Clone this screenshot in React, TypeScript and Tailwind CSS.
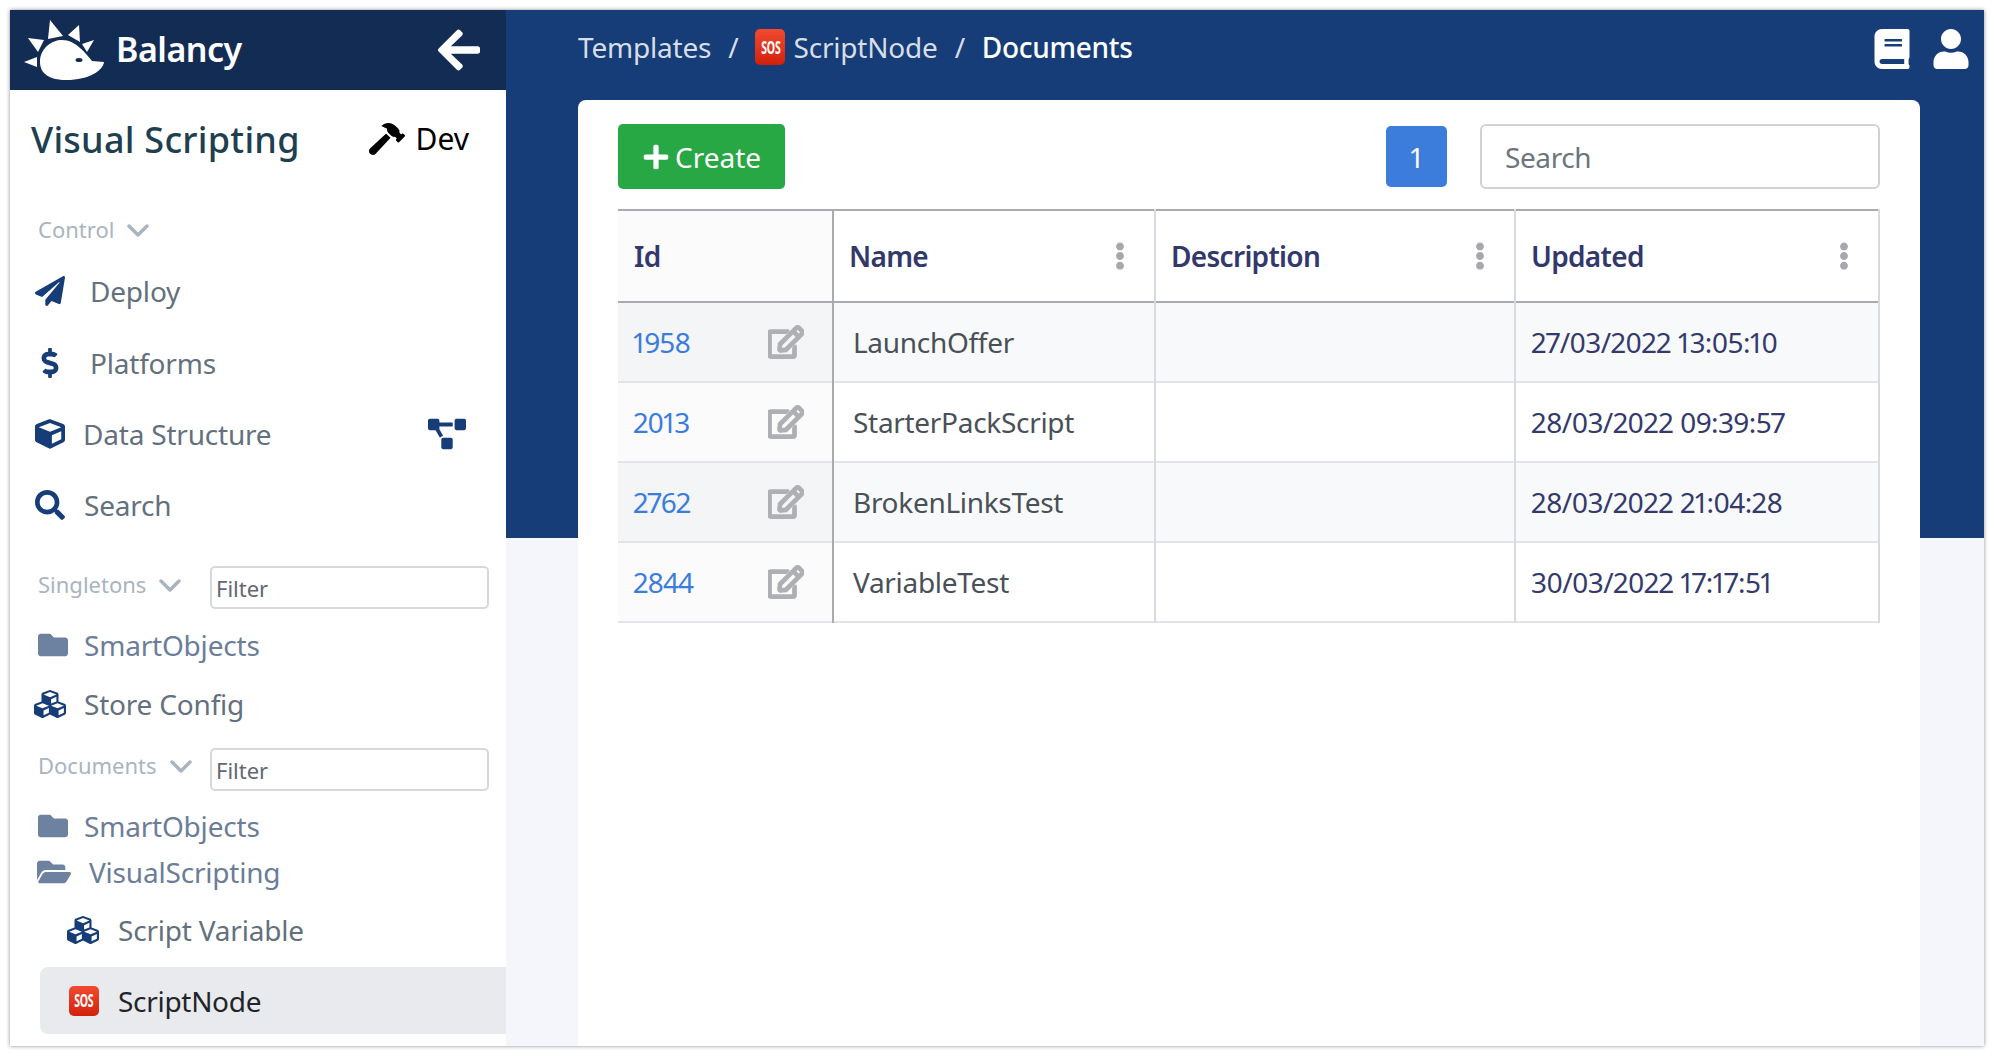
import React from 'react';
import {
  FaArrowLeft, FaBook, FaCube, FaCubes, FaDollarSign, FaEllipsisV, FaFolder, FaFolderOpen,
  FaHammer, FaPaperPlane, FaPlus, FaProjectDiagram, FaRegEdit, FaSearch, FaUser,
} from 'react-icons/fa';

const rows = [
  { id: '1958', name: 'LaunchOffer', updated: '27/03/2022 13:05:10' },
  { id: '2013', name: 'StarterPackScript', updated: '28/03/2022 09:39:57' },
  { id: '2762', name: 'BrokenLinksTest', updated: '28/03/2022 21:04:28' },
  { id: '2844', name: 'VariableTest', updated: '30/03/2022 17:17:51' },
];

function Logo() {
  return (
    <svg viewBox="24 18 80 60" className="w-[80px] h-[60px] shrink-0" fill="#fff">
      <path d="M40 60C40 46 52 38 62 38C76 38 86 52 92 59L104 60C103 68 90 78 66 78C50 78 40 72 40 60Z" />
      <polygon points="50,18 63,34 48,37" />
      <polygon points="79,23 80,40 68,33" />
      <polygon points="94,38 87,50 82,42" />
      <polygon points="28,36 44,38 38,50" />
      <polygon points="24,60 37,55 37,65" />
      <ellipse cx="79" cy="58" rx="3.5" ry="2" fill="#132c53" />
    </svg>
  );
}

function Sos({ className }: { className: string }) {
  return (
    <span className={`flex items-center justify-center rounded-[5px] bg-gradient-to-b from-[#f2492f] to-[#d21f0a] text-white font-bold shrink-0 ${className}`}>
      <span className="scale-x-75 scale-y-125">SOS</span>
    </span>
  );
}

function Chevron() {
  return (
    <svg viewBox="0 0 22 14" className="w-[22px] h-[14px] mt-[3px]" fill="none" stroke="#a9b4c0" strokeWidth="3.5" strokeLinecap="round" strokeLinejoin="round">
      <polyline points="2,2 11,11 20,2" />
    </svg>
  );
}

function SectionLabel({ label, className = '' }: { label: string; className?: string }) {
  return (
    <div className={`flex items-center gap-[13px] text-[22px] text-[#a9b4c0] ${className}`}>
      {label}
      <Chevron />
    </div>
  );
}

function NavItem({ icon, label, textClass }: { icon: React.ReactNode; label: string; textClass: string }) {
  return (
    <div className="flex items-center h-[71px] pl-[24px] text-[28px] tracking-[-0.2px] text-[#64707d]">
      <span className="w-[32px] flex justify-center text-[#163d77] shrink-0">{icon}</span>
      <span className={textClass}>{label}</span>
    </div>
  );
}

function FilterRow({ label, labelClass }: { label: string; labelClass: string }) {
  return (
    <div className="flex items-center justify-between pl-[28px] pr-[17px]">
      <SectionLabel label={label} className={labelClass} />
      <input
        placeholder="Filter"
        className="w-[279px] h-[43px] px-[4px] text-[22px] border-2 border-[#d6d8dc] rounded-[5px] placeholder:text-[#5f6873] outline-none"
      />
    </div>
  );
}

function FolderItem({ icon, label, rowClass, textClass }: { icon: React.ReactNode; label: string; rowClass: string; textClass: string }) {
  return (
    <div className={`flex items-center text-[28px] tracking-[-0.2px] ${rowClass}`}>
      {icon}
      <span className={textClass}>{label}</span>
    </div>
  );
}

function Sidebar() {
  return (
    <aside className="w-[496px] shrink-0 bg-white flex flex-col shadow-[1px_0_3px_rgba(0,0,0,0.2)]">
      <div className="h-[80px] shrink-0 bg-[#132c53] flex items-center pl-[14px] pr-[23px] text-white">
        <Logo />
        <span className="ml-[12px] mb-[2px] text-[34px] font-semibold tracking-[-0.5px] flex-1">Balancy</span>
        <FaArrowLeft size={48} />
      </div>

      <div className="h-[100px] shrink-0 flex items-center justify-between pl-[21px] pr-[37px]">
        <span className="text-[36px] font-medium tracking-[0.25px] text-[#1e3f50]">Visual Scripting</span>
        <span className="flex items-center gap-[11px] text-[30px] text-black mb-[3px]">
          <FaHammer size={36} />
          Dev
        </span>
      </div>

      <div className="pl-[28px] h-[40px] mt-[19px] flex items-center">
        <SectionLabel label="Control" />
      </div>
      <div className="mt-[6px] flex flex-col">
        <div className="mb-[1px]">
          <NavItem icon={<FaPaperPlane size={30} />} label="Deploy" textClass="ml-[24px]" />
        </div>
        <NavItem icon={<FaDollarSign size={30} />} label="Platforms" textClass="ml-[24px]" />
        <div className="flex items-center justify-between pr-[40px]">
          <NavItem icon={<FaCube size={30} />} label="Data Structure" textClass="ml-[17px]" />
          <FaProjectDiagram size={38} className="text-[#163d77]" />
        </div>
        <NavItem icon={<FaSearch size={30} />} label="Search" textClass="ml-[18px]" />
      </div>

      <div className="mt-[26px] flex flex-col text-[#6b7d99]">
        <FilterRow label="Singletons" labelClass="mb-[7px]" />
        <FolderItem
          icon={<FaFolder size={30} className="text-[#6d81a0]" />}
          label="SmartObjects"
          rowClass="mt-[14px] h-[44px] pl-[28px]"
          textClass="ml-[16px]"
        />
        <FolderItem
          icon={<FaCubes size={32} className="text-[#163d77]" />}
          label="Store Config"
          rowClass="mt-[15px] h-[44px] pl-[24px] text-[#64707d]"
          textClass="ml-[18px]"
        />
      </div>

      <div className="mt-[22px] flex flex-col text-[#6b7d99]">
        <FilterRow label="Documents" labelClass="mb-[9px]" />
        <FolderItem
          icon={<FaFolder size={30} className="text-[#6d81a0]" />}
          label="SmartObjects"
          rowClass="mt-[13px] h-[44px] pl-[28px]"
          textClass="ml-[16px]"
        />
        <FolderItem
          icon={<FaFolderOpen size={34} className="text-[#6d81a0]" />}
          label="VisualScripting"
          rowClass="mt-[2px] h-[44px] pl-[27px]"
          textClass="ml-[18px]"
        />
        <FolderItem
          icon={<FaCubes size={32} className="text-[#163d77]" />}
          label="Script Variable"
          rowClass="mt-[14px] h-[44px] pl-[57px] text-[#64707d]"
          textClass="ml-[19px]"
        />
        <div className="mt-[15px] ml-[30px] h-[67px] bg-[#e9eaed] rounded-l-[8px] flex items-center pl-[29px] text-[28px] tracking-[-0.3px] text-[#212529]">
          <Sos className="w-[30px] h-[30px] text-[14px]" />
          <span className="ml-[19px]">ScriptNode</span>
        </div>
      </div>
    </aside>
  );
}

function HeaderCell({ label, menu, pad }: { label: string; menu?: boolean; pad: string }) {
  return (
    <div className={`flex items-center justify-between pr-[20px] h-full text-[28px] font-semibold tracking-[-0.7px] text-[#32386b] ${pad}`}>
      {label}
      {menu && <FaEllipsisV size={28} className="text-[#a6a8ac]" />}
    </div>
  );
}

function DocumentsTable() {
  return (
    <table className="w-[1262px] table-fixed border-collapse mt-[20px] text-[28px] proportional-nums">
      <colgroup>
        <col className="w-[215px]" />
        <col className="w-[322px]" />
        <col className="w-[360px]" />
        <col />
      </colgroup>
      <thead>
        <tr className="h-[92px] border-y-2 border-[#a9abaf]">
          <th className="p-0 text-left font-normal bg-[#fbfbfc] border-r-2 border-[#a9abaf]"><HeaderCell label="Id" pad="pl-[16px]" /></th>
          <th className="p-0 text-left font-normal border-r-2 border-[#d8dae0]"><HeaderCell label="Name" menu pad="pl-[15px]" /></th>
          <th className="p-0 text-left font-normal border-r-2 border-[#d8dae0]"><HeaderCell label="Description" menu pad="pl-[15px]" /></th>
          <th className="p-0 text-left font-normal border-r-2 border-[#d8dae0]"><HeaderCell label="Updated" menu pad="pl-[15px]" /></th>
        </tr>
      </thead>
      <tbody>
        {rows.map((row, i) => (
          <tr key={row.id} className={`h-[80px] border-b-2 border-[#e3e4e7] ${i % 2 === 0 ? 'bg-[#f8f9fb]' : 'bg-white'}`}>
            <td className={`p-0 border-r-2 border-[#a9abaf] ${i % 2 === 0 ? 'bg-[#f4f5f7]' : 'bg-[#fbfbfc]'}`}>
              <div className="flex items-center justify-between pl-[15px] pr-[28px] tracking-[-1px] text-[#3b7ddd]">
                {row.id}
                <FaRegEdit size={36} className="text-[#aeb0b3] stroke-[#aeb0b3] stroke-[28px]" />
              </div>
            </td>
            <td className="p-0 pl-[19px] border-r-2 border-[#d8dae0] tracking-[-0.3px] text-[#495057]">{row.name}</td>
            <td className="p-0 border-r-2 border-[#d8dae0]" />
            <td className="p-0 pl-[15px] border-r-2 border-[#d8dae0] tracking-[-0.6px] text-[#343a6b]">{row.updated}</td>
          </tr>
        ))}
      </tbody>
    </table>
  );
}

export default function App() {
  return (
    <div className="h-[1056px] p-[10px] bg-white overflow-hidden font-['Noto_Sans',sans-serif]">
      <div className="h-full flex overflow-hidden shadow-[0_0_4px_rgba(0,0,0,0.45)]">
        <Sidebar />
        <main className="flex-1 flex flex-col bg-[linear-gradient(#163d77_528px,#f5f6fb_528px)]">
          <div className="h-[90px] shrink-0 flex items-start justify-between pl-[72px] pr-[13px] pt-[12px]">
            <div className="flex items-center h-[50px] text-[28px] tracking-[-0.2px] text-[#d8dee8]">
              <span>Templates</span>
              <span className="mx-[17px]">/</span>
              <Sos className="w-[30px] h-[36px] text-[14px]" />
              <span className="ml-[8px]">ScriptNode</span>
              <span className="mx-[17px]">/</span>
              <span className="text-white font-medium tracking-[-0.3px]">Documents</span>
            </div>
            <div className="flex items-center gap-[19px] text-white mt-[7px]">
              <FaBook size={40} />
              <FaUser size={40} />
            </div>
          </div>
          <section className="flex-1 ml-[72px] mr-[64px] bg-white rounded-t-[8px] pt-[24px] pl-[40px]">
            <div className="w-[1262px] flex items-center">
              <button className="w-[167px] h-[65px] flex items-center justify-center gap-[5px] bg-[#28a745] rounded-[5px] text-white text-[28px]">
                <FaPlus size={28} />
                Create
              </button>
              <button className="ml-auto w-[61px] h-[61px] bg-[#3c7ddc] rounded-[5px] text-white text-[28px]">1</button>
              <input
                placeholder="Search"
                className="ml-[33px] w-[400px] h-[65px] px-[23px] text-[28px] tracking-[-0.4px] border-2 border-[#d0d2d8] rounded-[6px] placeholder:text-[#6c757d] outline-none"
              />
            </div>
            <DocumentsTable />
          </section>
        </main>
      </div>
    </div>
  );
}
